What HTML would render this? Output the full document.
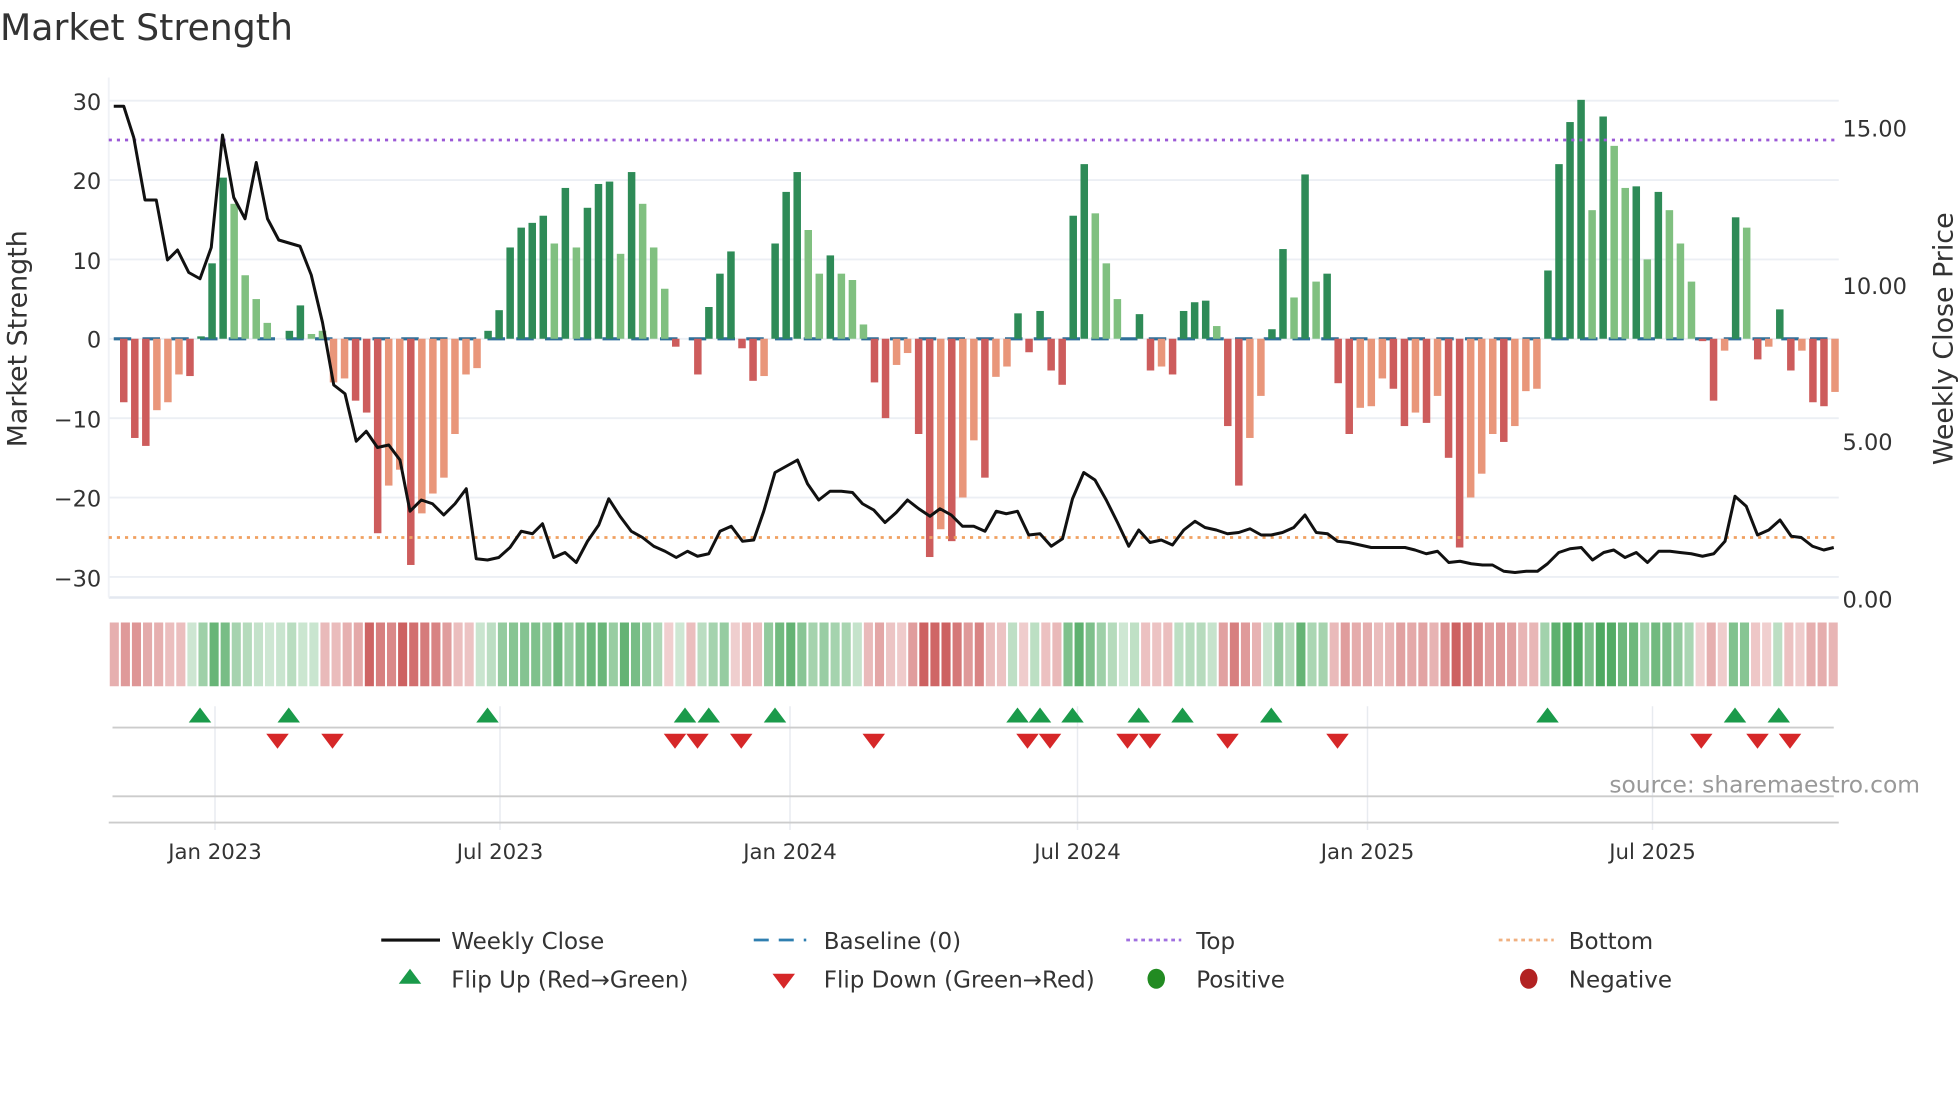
<!DOCTYPE html>
<html><head><meta charset="utf-8">
<style>
html,body{margin:0;padding:0;background:#fff;}
svg{display:block;font-family:"DejaVu Sans","Liberation Sans",sans-serif;}
</style></head>
<body>
<svg id="s" width="1960" height="1102" viewBox="0 0 1568 881.6" xmlns="http://www.w3.org/2000/svg">
<rect width="1568" height="882" fill="#fff"/>
<text x="0" y="32" font-size="29" fill="#333">Market Strength</text>
<g id="grid"></g>
<g id="bars"></g>
<line x1="87" y1="112" x2="1471" y2="112" stroke="#9b59d6" stroke-width="2.2" stroke-dasharray="2.5,4"/>
<line x1="87" y1="430" x2="1471" y2="430" stroke="#f0a060" stroke-width="2.2" stroke-dasharray="2.5,4"/>
<polyline id="price" fill="none" stroke="#111" stroke-width="2.4" stroke-linejoin="round"/>
<g font-size="18" fill="#333" text-anchor="end">
<text x="81" y="88">30</text><text x="81" y="151">20</text><text x="81" y="215">10</text>
<text x="81" y="278">0</text><text x="81" y="342">−10</text><text x="81" y="405">−20</text><text x="81" y="469">−30</text>
</g>
<g font-size="18" fill="#333">
<text x="1474" y="109">15.00</text><text x="1474" y="235">10.00</text><text x="1474" y="360">5.00</text><text x="1474" y="486">0.00</text>
</g>
<text transform="translate(21,271) rotate(-90)" font-size="21.5" fill="#333" text-anchor="middle">Market Strength</text>
<text transform="translate(1562,271) rotate(-90)" font-size="21.5" fill="#333" text-anchor="middle">Weekly Close Price</text>
<g id="heat"></g>
<g id="mk"></g>
<line x1="90" y1="582" x2="1467" y2="582" stroke="#ccc" stroke-width="1.5"/>
<line x1="90" y1="637" x2="1467" y2="637" stroke="#ccc" stroke-width="1.5"/>
<line x1="87" y1="658" x2="1471" y2="658" stroke="#ccc" stroke-width="1.5"/>
<text x="1536" y="634" font-size="18.7" fill="#999" text-anchor="end">source: sharemaestro.com</text>
<g font-size="17" fill="#333" text-anchor="middle">
<text x="172" y="687">Jan 2023</text><text x="400" y="687">Jul 2023</text><text x="632" y="687">Jan 2024</text>
<text x="862" y="687">Jul 2024</text><text x="1094" y="687">Jan 2025</text><text x="1322" y="687">Jul 2025</text>
</g>
<g font-size="18.4" fill="#333">
<line x1="305" y1="752" x2="352" y2="752" stroke="#111" stroke-width="2.5"/><text x="361" y="759">Weekly Close</text>
<line x1="603" y1="752" x2="645" y2="752" stroke="#2f7fb0" stroke-width="2.2" stroke-dasharray="12,8"/><text x="659" y="759">Baseline (0)</text>
<line x1="901" y1="752" x2="945" y2="752" stroke="#a070e0" stroke-width="2.2" stroke-dasharray="3,3"/><text x="957" y="759">Top</text>
<line x1="1199" y1="752" x2="1243" y2="752" stroke="#f0b080" stroke-width="2.2" stroke-dasharray="3,3"/><text x="1255" y="759">Bottom</text>
<polygon points="328,775 319,787 337,787" fill="#1a9a4a"/><text x="361" y="790">Flip Up (Red→Green)</text>
<polygon points="627,791 618,779 636,779" fill="#d62728"/><text x="659" y="790">Flip Down (Green→Red)</text>
<ellipse cx="925" cy="783" rx="7" ry="8" fill="#228b22"/><text x="957" y="790">Positive</text>
<ellipse cx="1223" cy="783" rx="7" ry="8" fill="#b22222"/><text x="1255" y="790">Negative</text>
</g>
</svg>
<script>
var NS="http://www.w3.org/2000/svg";
function el(p,t,a){var e=document.createElementNS(NS,t);for(var k in a)e.setAttribute(k,a[k]);document.getElementById(p).appendChild(e);return e;}
[30,20,10,0,-10,-20,-30].forEach(function(v){var y=271-6.35*v;el("grid","line",{x1:87,x2:1471,y1:y,y2:y,stroke:"#eceff4","stroke-width":1.5});});
el("grid","line",{x1:87,x2:1471,y1:478,y2:478,stroke:"#e4e8f0","stroke-width":2});
el("grid","line",{x1:87,x2:87,y1:62,y2:478,stroke:"#f0f2f6","stroke-width":1.5});
[172,400,632,862,1094,1322].forEach(function(x){el("grid","line",{x1:x,x2:x,y1:565,y2:664,stroke:"#e8ebf0","stroke-width":1.2});});
var B=[[-8,1],[-12.5,1],[-13.5,1],[-9,0],[-8,0],[-4.5,0],[-4.7,1],[0.3,1],[9.5,1],[20.3,1],[17,0],[8,0],[5,0],[2,0],[0,0],[1,1],[4.2,1],[0.6,0],[1,0],
[-5.5,0],[-5,0],[-7.8,1],[-9.3,1],[-24.5,1],[-18.5,0],[-16.5,0],[-28.5,1],[-22,0],[-19.5,0],[-17.5,0],[-12,0],[-4.5,0],[-3.7,0],[1,1],[3.6,1],[11.5,1],[14,1],[14.6,1],[15.5,1],[12,0],[19,1],[11.5,0],[16.5,1],[19.5,1],[19.8,1],[10.7,0],[21,1],[17,0],[11.5,0],[6.3,0],[-1,1],[0,0],[-4.5,1],[4,1],[8.2,1],[11,1],[-1.2,1],[-5.3,1],[-4.7,0],[12,1],[18.5,1],[21,1],[13.7,0],[8.2,0],[10.5,1],[8.2,0],[7.4,0],[1.8,0],[-5.5,1],[-10,1],[-3.3,0],[-1.8,0],[-12,1],[-27.5,1],[-24,0],[-25.5,1],[-20,0],[-12.8,0],[-17.5,1],[-4.8,0],[-3.5,0],[3.2,1],[-1.7,1],[3.5,1],[-4,1],[-5.8,1],[15.5,1],[22,1],[15.8,0],[9.5,0],[5,0],[0,0],[3.1,1],[-4,1],[-3.5,0],[-4.5,1],[3.5,1],[4.6,1],[4.8,1],[1.6,0],[-11,1],[-18.5,1],[-12.5,0],[-7.2,0],[1.2,1],[11.3,1],[5.2,0],[20.7,1],[7.2,0],[8.2,1],[-5.6,1],[-12,1],[-8.7,0],[-8.5,0],[-5,0],[-6.3,1],[-11,1],[-9.3,0],[-10.6,1],[-7.2,0],[-15,1],[-26.3,1],[-20,0],[-17,0],[-12,0],[-13,1],[-11,0],[-6.6,0],[-6.3,0],[8.6,1],[22,1],[27.3,1],[30.1,1],[16.2,0],[28,1],[24.3,0],[19,0],[19.2,1],[10,0],[18.5,1],[16.2,0],[12,0],[7.2,0],[-0.3,1],[-7.8,1],[-1.5,0],[15.3,1],[14,0],[-2.6,1],[-1,0],[3.7,1],[-4,1],[-1.5,0],[-8,1],[-8.5,1],[-6.7,0]];
var sp=(1468-99)/(B.length-1);
el("bars","line",{x1:91,x2:1467,y1:271,y2:271,stroke:"#2f6f98","stroke-width":2.5,"stroke-dasharray":"14,9"});
B.forEach(function(b,i){var x=99+sp*i,v=b[0],h=Math.abs(v)*6.35;if(h<0.5)return;
var c=v>0?(b[1]?"#2e8b57":"#80c080"):(b[1]?"#cd5c5c":"#e9967a");
el("bars","rect",{x:x-3,y:v>0?271-h:271,width:6,height:h,fill:c});});
var hw=(1471-87)/B.length;
B.forEach(function(b,i){var x=87+hw*i,v=b[0],m=Math.min(Math.abs(v)/25,1);var a=0.25+0.65*m;
var c=v>=0?"rgba(60,160,80,"+a+")":"rgba(200,80,80,"+a+")";
el("heat","rect",{x:x+0.8,y:498,width:hw-1.6,height:51,fill:c});});
var P="91,85 99,85 107,110 116,160 125,160 134,208 142,200 151,218 160,223 169,198 178,108 187,158 196,175 205,130 214,175 223,192 240,197 249,220 258,258 267,308 276,315 285,353 293,345 302,358 311,356 320,368 328,409 337,400 346,403 355,412 364,403 373,391 381,447 390,448 399,446 408,438 417,425 426,427 434,419 443,446 452,442 461,450 470,433 479,420 487,399 496,413 505,425 514,430 523,437 532,441 541,446 550,441 558,445 567,443 576,425 585,421 594,433 603,432 611,409 620,378 629,373 638,368 646,387 655,400 664,393 673,393 682,394 690,403 699,408 708,418 717,410 726,400 735,407 744,413 752,407 761,412 770,421 779,421 788,425 797,409 805,411 814,409 823,428 832,427 841,437 850,431 858,399 867,378 876,384 885,400 894,418 903,437 911,424 920,434 929,432 938,436 947,424 956,417 964,422 973,424 982,427 991,426 1000,423 1009,428 1017,428 1026,426 1035,422 1044,412 1053,426 1062,427 1070,433 1079,434 1088,436 1097,438 1106,438 1115,438 1124,438 1132,440 1141,443 1150,441 1159,450 1168,449 1177,451 1186,452 1194,452 1203,457 1212,458 1221,457 1230,457 1238,451 1247,442 1256,439 1265,438 1274,448 1283,442 1291,440 1300,446 1309,442 1318,450 1327,441 1336,441 1344,442 1353,443 1362,445 1371,443 1380,433 1388,397 1397,405 1406,428 1415,424 1424,416 1433,429 1441,430 1450,437 1459,440 1467,438";
document.getElementById("price").setAttribute("points",P);
[160,231,390,548,567,620,814,832,858,911,946,1017,1238,1388,1423].forEach(function(x){el("mk","polygon",{points:(x)+",566 "+(x-9)+",578 "+(x+9)+",578",fill:"#1a9a4a"});});
[222,266,540,558,593,699,822,840,902,920,982,1070,1361,1406,1432].forEach(function(x){el("mk","polygon",{points:(x)+",599 "+(x-9)+",587 "+(x+9)+",587",fill:"#d62728"});});
</script>
</body></html>
